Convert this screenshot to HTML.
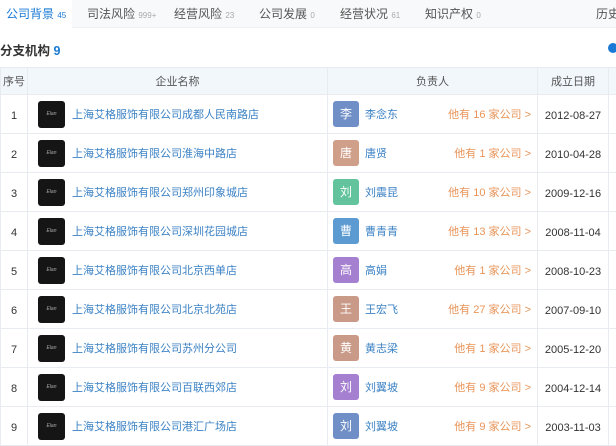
<!DOCTYPE html><html><head><meta charset="utf-8"><style>
*{margin:0;padding:0;box-sizing:border-box}
body{width:616px;height:440px;overflow:hidden;background:#fff;font-family:"Liberation Sans","Noto Sans CJK SC",sans-serif;font-size:11px;color:#333;position:relative}
.tabs{height:28px;background:#f8f9fa;border-bottom:1px solid #eef0f3;position:relative}
.tab{position:absolute;top:5px;font-size:12px;color:#555;white-space:nowrap}
.tab small{font-size:8px;color:#aaa}
.tab.on{color:#1a7ad6;background:#fff;top:0;height:28px;padding:5px 6px 0 6px;left:0}
.tab.on small{color:#1a7ad6}
h2{position:absolute;top:40px;left:0;font-size:12.5px;font-weight:bold;color:#333}
h2 span{color:#1a7ad6}
.dot{position:absolute;left:608px;top:43px;width:10px;height:10px;border-radius:50%;background:#1a7ad6}
.row{position:absolute;left:0;width:620px;height:39px;border-bottom:1px solid #e8ecf0}
.hd{top:67px;height:28px;background:#f2f7fc;border-top:1px solid #e8ecf0;color:#555}
.c{position:absolute;top:0;bottom:0;display:flex;align-items:center;border-left:1px solid #e8ecf0;white-space:nowrap}
.c0{left:0;width:27px;justify-content:center}
.c1{left:27px;width:300px}
.c2{left:327px;width:210px}
.c3{left:537px;width:71px;justify-content:center}
.c4{left:608px;width:12px}
.row:not(.hd) .c0,.row:not(.hd) .c3{padding-top:3px}
.hd .c1,.hd .c2{justify-content:center}
.logo{width:27px;height:27px;background:#151515;border-radius:3px;margin:0 7px 0 10px;color:#aaa;font-size:5px;line-height:27px;text-align:center;font-style:italic;flex:none}
.blue{color:#3b82c4}
.av{width:26px;height:26px;border-radius:3px;color:#fff;text-align:center;line-height:26px;font-size:12px;margin:0 6px 0 5px;flex:none}
.cnt{margin-left:auto;color:#e9955a;margin-right:6px}
</style></head><body>
<div class="tabs">
<div class="tab on">公司背景 <small>45</small></div>
<div class="tab" style="left:87px">司法风险 <small>999+</small></div>
<div class="tab" style="left:174px">经营风险 <small>23</small></div>
<div class="tab" style="left:259px">公司发展 <small>0</small></div>
<div class="tab" style="left:340px">经营状况 <small>61</small></div>
<div class="tab" style="left:425px">知识产权 <small>0</small></div>
<div class="tab" style="left:596px">历史</div>
</div>
<h2>分支机构 <span>9</span></h2><div class="dot"></div>
<div class="row hd"><div class="c c0">序号</div><div class="c c1">企业名称</div><div class="c c2">负责人</div><div class="c c3">成立日期</div><div class="c c4"></div></div>

<div class="row" style="top:95px"><div class="c c0">1</div><div class="c c1"><span class="logo">Elan</span><span class="blue">上海艾格服饰有限公司成都人民南路店</span></div><div class="c c2"><span class="av" style="background:#6f8fc6">李</span><span class="blue">李念东</span><span class="cnt">他有 16 家公司 &gt;</span></div><div class="c c3">2012-08-27</div><div class="c c4"></div></div>
<div class="row" style="top:134px"><div class="c c0">2</div><div class="c c1"><span class="logo">Elan</span><span class="blue">上海艾格服饰有限公司淮海中路店</span></div><div class="c c2"><span class="av" style="background:#d09f8a">唐</span><span class="blue">唐贤</span><span class="cnt">他有 1 家公司 &gt;</span></div><div class="c c3">2010-04-28</div><div class="c c4"></div></div>
<div class="row" style="top:173px"><div class="c c0">3</div><div class="c c1"><span class="logo">Elan</span><span class="blue">上海艾格服饰有限公司郑州印象城店</span></div><div class="c c2"><span class="av" style="background:#62c39c">刘</span><span class="blue">刘震昆</span><span class="cnt">他有 10 家公司 &gt;</span></div><div class="c c3">2009-12-16</div><div class="c c4"></div></div>
<div class="row" style="top:212px"><div class="c c0">4</div><div class="c c1"><span class="logo">Elan</span><span class="blue">上海艾格服饰有限公司深圳花园城店</span></div><div class="c c2"><span class="av" style="background:#5b9bd1">曹</span><span class="blue">曹青青</span><span class="cnt">他有 13 家公司 &gt;</span></div><div class="c c3">2008-11-04</div><div class="c c4"></div></div>
<div class="row" style="top:251px"><div class="c c0">5</div><div class="c c1"><span class="logo">Elan</span><span class="blue">上海艾格服饰有限公司北京西单店</span></div><div class="c c2"><span class="av" style="background:#a57fd0">高</span><span class="blue">高娟</span><span class="cnt">他有 1 家公司 &gt;</span></div><div class="c c3">2008-10-23</div><div class="c c4"></div></div>
<div class="row" style="top:290px"><div class="c c0">6</div><div class="c c1"><span class="logo">Elan</span><span class="blue">上海艾格服饰有限公司北京北苑店</span></div><div class="c c2"><span class="av" style="background:#c99a88">王</span><span class="blue">王宏飞</span><span class="cnt">他有 27 家公司 &gt;</span></div><div class="c c3">2007-09-10</div><div class="c c4"></div></div>
<div class="row" style="top:329px"><div class="c c0">7</div><div class="c c1"><span class="logo">Elan</span><span class="blue">上海艾格服饰有限公司苏州分公司</span></div><div class="c c2"><span class="av" style="background:#c99a88">黄</span><span class="blue">黄志梁</span><span class="cnt">他有 1 家公司 &gt;</span></div><div class="c c3">2005-12-20</div><div class="c c4"></div></div>
<div class="row" style="top:368px"><div class="c c0">8</div><div class="c c1"><span class="logo">Elan</span><span class="blue">上海艾格服饰有限公司百联西郊店</span></div><div class="c c2"><span class="av" style="background:#a57fd0">刘</span><span class="blue">刘翼坡</span><span class="cnt">他有 9 家公司 &gt;</span></div><div class="c c3">2004-12-14</div><div class="c c4"></div></div>
<div class="row" style="top:407px"><div class="c c0">9</div><div class="c c1"><span class="logo">Elan</span><span class="blue">上海艾格服饰有限公司港汇广场店</span></div><div class="c c2"><span class="av" style="background:#6f8fc6">刘</span><span class="blue">刘翼坡</span><span class="cnt">他有 9 家公司 &gt;</span></div><div class="c c3">2003-11-03</div><div class="c c4"></div></div>
</body></html>
